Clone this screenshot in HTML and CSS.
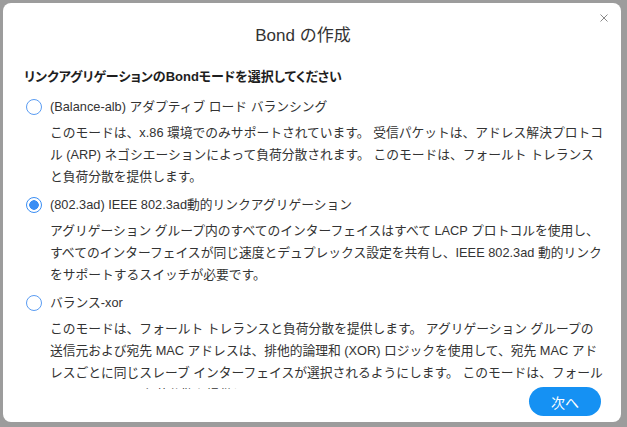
FILE: index.html
```html
<!DOCTYPE html>
<html lang="ja">
<head>
  <meta charset="UTF-8">
  <meta name="viewport" content="width=device-width, initial-scale=1.0">
  <title>Bond の作成</title>
  <link rel="stylesheet" href="styles.css">
</head>
<body>
  <div class="dialog">
    <button class="dialog-close" aria-label="閉じる">
      <svg width="8" height="8" viewBox="0 0 8 8"><path d="M0.5 0.5 L7.5 7.5 M7.5 0.5 L0.5 7.5" stroke="#8a8a8a" stroke-width="1" fill="none"/></svg>
    </button>
    <div class="dialog-header">Bond の作成</div>

    <div class="dialog-body">
      <h2>リンクアグリゲーションのBondモードを選択してください</h2>

      <label class="option">
        <input type="radio" name="mode" value="balance-alb">
        <span class="option-title">(Balance-alb) アダプティブ ロード バランシング</span>
        <span class="option-desc">このモードは、x.86 環境でのみサポートされています。 受信パケットは、アドレス解決プロトコル (ARP) ネゴシエーションによって負荷分散されます。 このモードは、フォールト トレランスと負荷分散を提供します。</span>
      </label>

      <label class="option">
        <input type="radio" name="mode" value="802.3ad" checked>
        <span class="option-title">(802.3ad) IEEE 802.3ad動的リンクアグリゲーション</span>
        <span class="option-desc">アグリゲーション グループ内のすべてのインターフェイスはすべて LACP プロトコルを使用し、すべてのインターフェイスが同じ速度とデュプレックス設定を共有し、IEEE 802.3ad 動的リンクをサポートするスイッチが必要です。</span>
      </label>

      <label class="option">
        <input type="radio" name="mode" value="balance-xor">
        <span class="option-title">バランス-xor</span>
        <span class="option-desc">このモードは、フォールト トレランスと負荷分散を提供します。 アグリゲーション グループの送信元および宛先 MAC アドレスは、排他的論理和 (XOR) ロジックを使用して、宛先 MAC アドレスごとに同じスレーブ インターフェイスが選択されるようにします。 このモードは、フォールト トレランスと負荷分散を提供します。</span>
      </label>
    </div>

    <div class="dialog-footer">
      <button class="btn-primary">次へ</button>
    </div>
  </div>
</body>
</html>
```

FILE: styles.css
```css
body {
  margin: 0;
  padding: 3px;
  background: #9c9c9c;
  font-family: "Liberation Sans", "Noto Sans CJK JP", sans-serif;
  color: #333;
}
.dialog {
  position: relative;
  width: 618px;
  height: 419px;
  background: #fff;
  border-radius: 8px;
  display: flex;
  flex-direction: column;
  overflow: hidden;
}
.dialog-close {
  position: absolute;
  top: 10px;
  right: 12px;
  width: 10px;
  height: 10px;
  padding: 1px;
  border: none;
  background: none;
  cursor: pointer;
  display: flex;
}
.dialog-header {
  padding: 20px 40px 0 22px;
  font-size: 17px;
  line-height: 26px;
  text-align: center;
  color: #333;
}
.dialog-body {
  flex: 1;
  overflow: hidden;
  padding: 18px 16px 0 21px;
}
.dialog-body h2 {
  margin: 0 0 10px;
  font-size: 13px;
  line-height: 20px;
  font-weight: 700;
  color: #1e1e1e;
  font-feature-settings: "palt";
}
/* latin stays at 13px, kana/kanji come out a little narrower */
.option {
  display: grid;
  grid-template-columns: 16px 1fr;
  column-gap: 10px;
  row-gap: 5px;
  margin-bottom: 7px;
  font-size: 13px;
  font-size-adjust: 0.519;
  cursor: pointer;
}
.option input {
  appearance: none;
  margin: 2px 0 0 2px;
  width: 16px;
  height: 16px;
  border: 1.5px solid #5a9cf2;
  border-radius: 50%;
  background: #fff;
  cursor: pointer;
}
.option input:checked {
  border-color: #3a8ef4;
  background: radial-gradient(circle, #3a8ef4 0 4.5px, #fff 5px);
}
.option-title {
  line-height: 20px;
}
.option-desc {
  grid-column: 2;
  line-height: 22px;
}
.dialog-footer {
  display: flex;
  justify-content: flex-end;
  margin-top: -2px;
  padding: 0 20px 6px;
  height: 29px;
}
.btn-primary {
  width: 72px;
  height: 29px;
  border: none;
  border-radius: 15px;
  background: #1591f3;
  color: #fff;
  font-family: "Liberation Sans", "Noto Sans CJK JP", sans-serif;
  font-size: 14px;
  cursor: pointer;
}
```
